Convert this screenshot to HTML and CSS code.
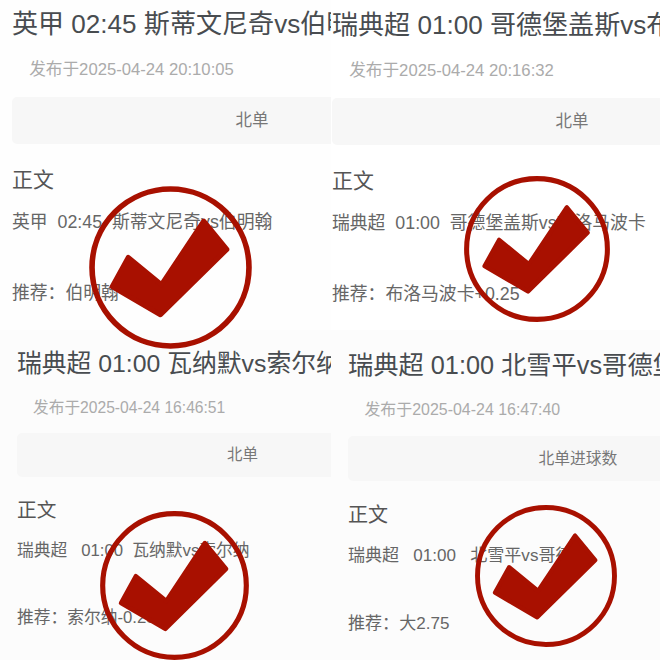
FILE: index.html
```html
<!DOCTYPE html>
<html>
<head>
    <meta charset="utf-8" />
    <title>推荐</title>
    <link rel="stylesheet" href="styles.css">
</head>
<body>
    <svg class="defs" width="0" height="0">
        <symbol id="stamp" viewBox="-82 -82 164 164">
            <circle cx="0" cy="0" r="78" fill="none" stroke="#a81000" stroke-width="5.6" />
            <path d="M-42 -10 L-58 19 L-10 47 L56 -18 L33 -46 L-9 17 Z" fill="#a81000" stroke="#a81000" stroke-width="5" stroke-linejoin="round" />
        </symbol>
    </svg>
    <div class="page">
        <div class="panel panelA">
            <h2 class="title">英甲 02:45 斯蒂文尼奇vs伯明翰</h2>
            <div class="date">发布于2025-04-24 20:10:05</div>
            <div class="tag">北单</div>
            <h3 class="heading">正文</h3>
            <p class="line">英甲&nbsp; 02:45&nbsp; 斯蒂文尼奇vs伯明翰</p>
            <p class="line pick">推荐：伯明翰</p>
        </div>
        <div class="panel panelB">
            <h2 class="title">瑞典超 01:00 哥德堡盖斯vs布洛马波卡</h2>
            <div class="date">发布于2025-04-24 20:16:32</div>
            <div class="tag">北单</div>
            <h3 class="heading">正文</h3>
            <p class="line">瑞典超&nbsp; 01:00&nbsp; 哥德堡盖斯vs布洛马波卡</p>
            <p class="line pick">推荐：布洛马波卡+0.25</p>
        </div>
        <div class="panel panelC">
            <h2 class="title">瑞典超 01:00 瓦纳默vs索尔纳</h2>
            <div class="date">发布于2025-04-24 16:46:51</div>
            <div class="tag">北单</div>
            <h3 class="heading">正文</h3>
            <p class="line">瑞典超&nbsp;&nbsp; 01:00&nbsp; 瓦纳默vs索尔纳</p>
            <p class="line pick">推荐：索尔纳-0.25</p>
        </div>
        <div class="panel panelD">
            <h2 class="title">瑞典超 01:00 北雪平vs哥德堡</h2>
            <div class="date">发布于2025-04-24 16:47:40</div>
            <div class="tag">北单进球数</div>
            <h3 class="heading">正文</h3>
            <p class="line">瑞典超&nbsp;&nbsp; 01:00&nbsp;&nbsp; 北雪平vs哥德堡</p>
            <p class="line pick">推荐：大2.75</p>
        </div>

        <svg class="stamp stampA"><use href="#stamp" /></svg>
        <svg class="stamp stampB"><use href="#stamp" /></svg>
        <svg class="stamp stampC"><use href="#stamp" /></svg>
        <svg class="stamp stampD"><use href="#stamp" /></svg>
    </div>
</body>
</html>
```

FILE: styles.css
```css
* {
    box-sizing: border-box;
}

body {
    margin: 0;
    background-color: #fff;
    font-family: "Liberation Sans", "Noto Sans CJK SC", sans-serif;
}

.defs {
    display: block;
}

.page {
    position: relative;
    display: grid;
    grid-template-columns: 331px 329px;
    grid-template-rows: 330px 330px;
    width: 660px;
    height: 660px;
    overflow: hidden;
}

.panel {
    overflow: hidden;
    white-space: nowrap;
    background-color: #fff;
}

.panelA {
    padding: 0 0 0 12px;
    font-size: 16.5px;
    background-color: #fefefe;
}

.panelB {
    padding: 1px 0 0 1px;
    font-size: 16.5px;
}

.panelC {
    padding: 9px 0 0 17px;
    font-size: 15.5px;
    background-color: #fcfcfc;
}

.panelD {
    padding: 11px 0 0 17px;
    font-size: 15.8px;
    background-color: #fcfcfc;
}

.title {
    margin: 0;
    font-size: 1.6em;
    font-weight: normal;
    line-height: 49px;
    color: #484c50;
}

.panelA .title,
.panelB .title {
    font-size: 1.58em;
}

.date {
    margin: 0.5em 0 0 1.03em;
    font-size: 1.01em;
    line-height: 1.5em;
    color: #ababab;
}

.tag {
    width: 29.1em;
    height: 2.83em;
    margin-top: 0.9em;
    border-radius: 5px;
    background-color: #f7f7f7;
    color: #777;
    line-height: 2.9em;
    text-align: center;
}

.heading {
    margin: 0.97em 0 0 0;
    font-size: 1.27em;
    font-weight: normal;
    line-height: 1.5;
    color: #555;
}

.line {
    margin: 0.74em 0 0 0;
    font-size: 1.08em;
    line-height: 1.5em;
    color: #666;
}

.pick {
    margin-top: 2.48em;
}

.stamp {
    position: absolute;
}

.stampA {
    left: 88px;
    top: 185px;
    width: 165px;
    height: 165px;
}

.stampB {
    left: 463px;
    top: 175px;
    width: 148px;
    height: 148px;
}

.stampC {
    left: 99px;
    top: 510px;
    width: 151px;
    height: 151px;
}

.stampD {
    left: 474px;
    top: 504px;
    width: 144px;
    height: 144px;
}
```
